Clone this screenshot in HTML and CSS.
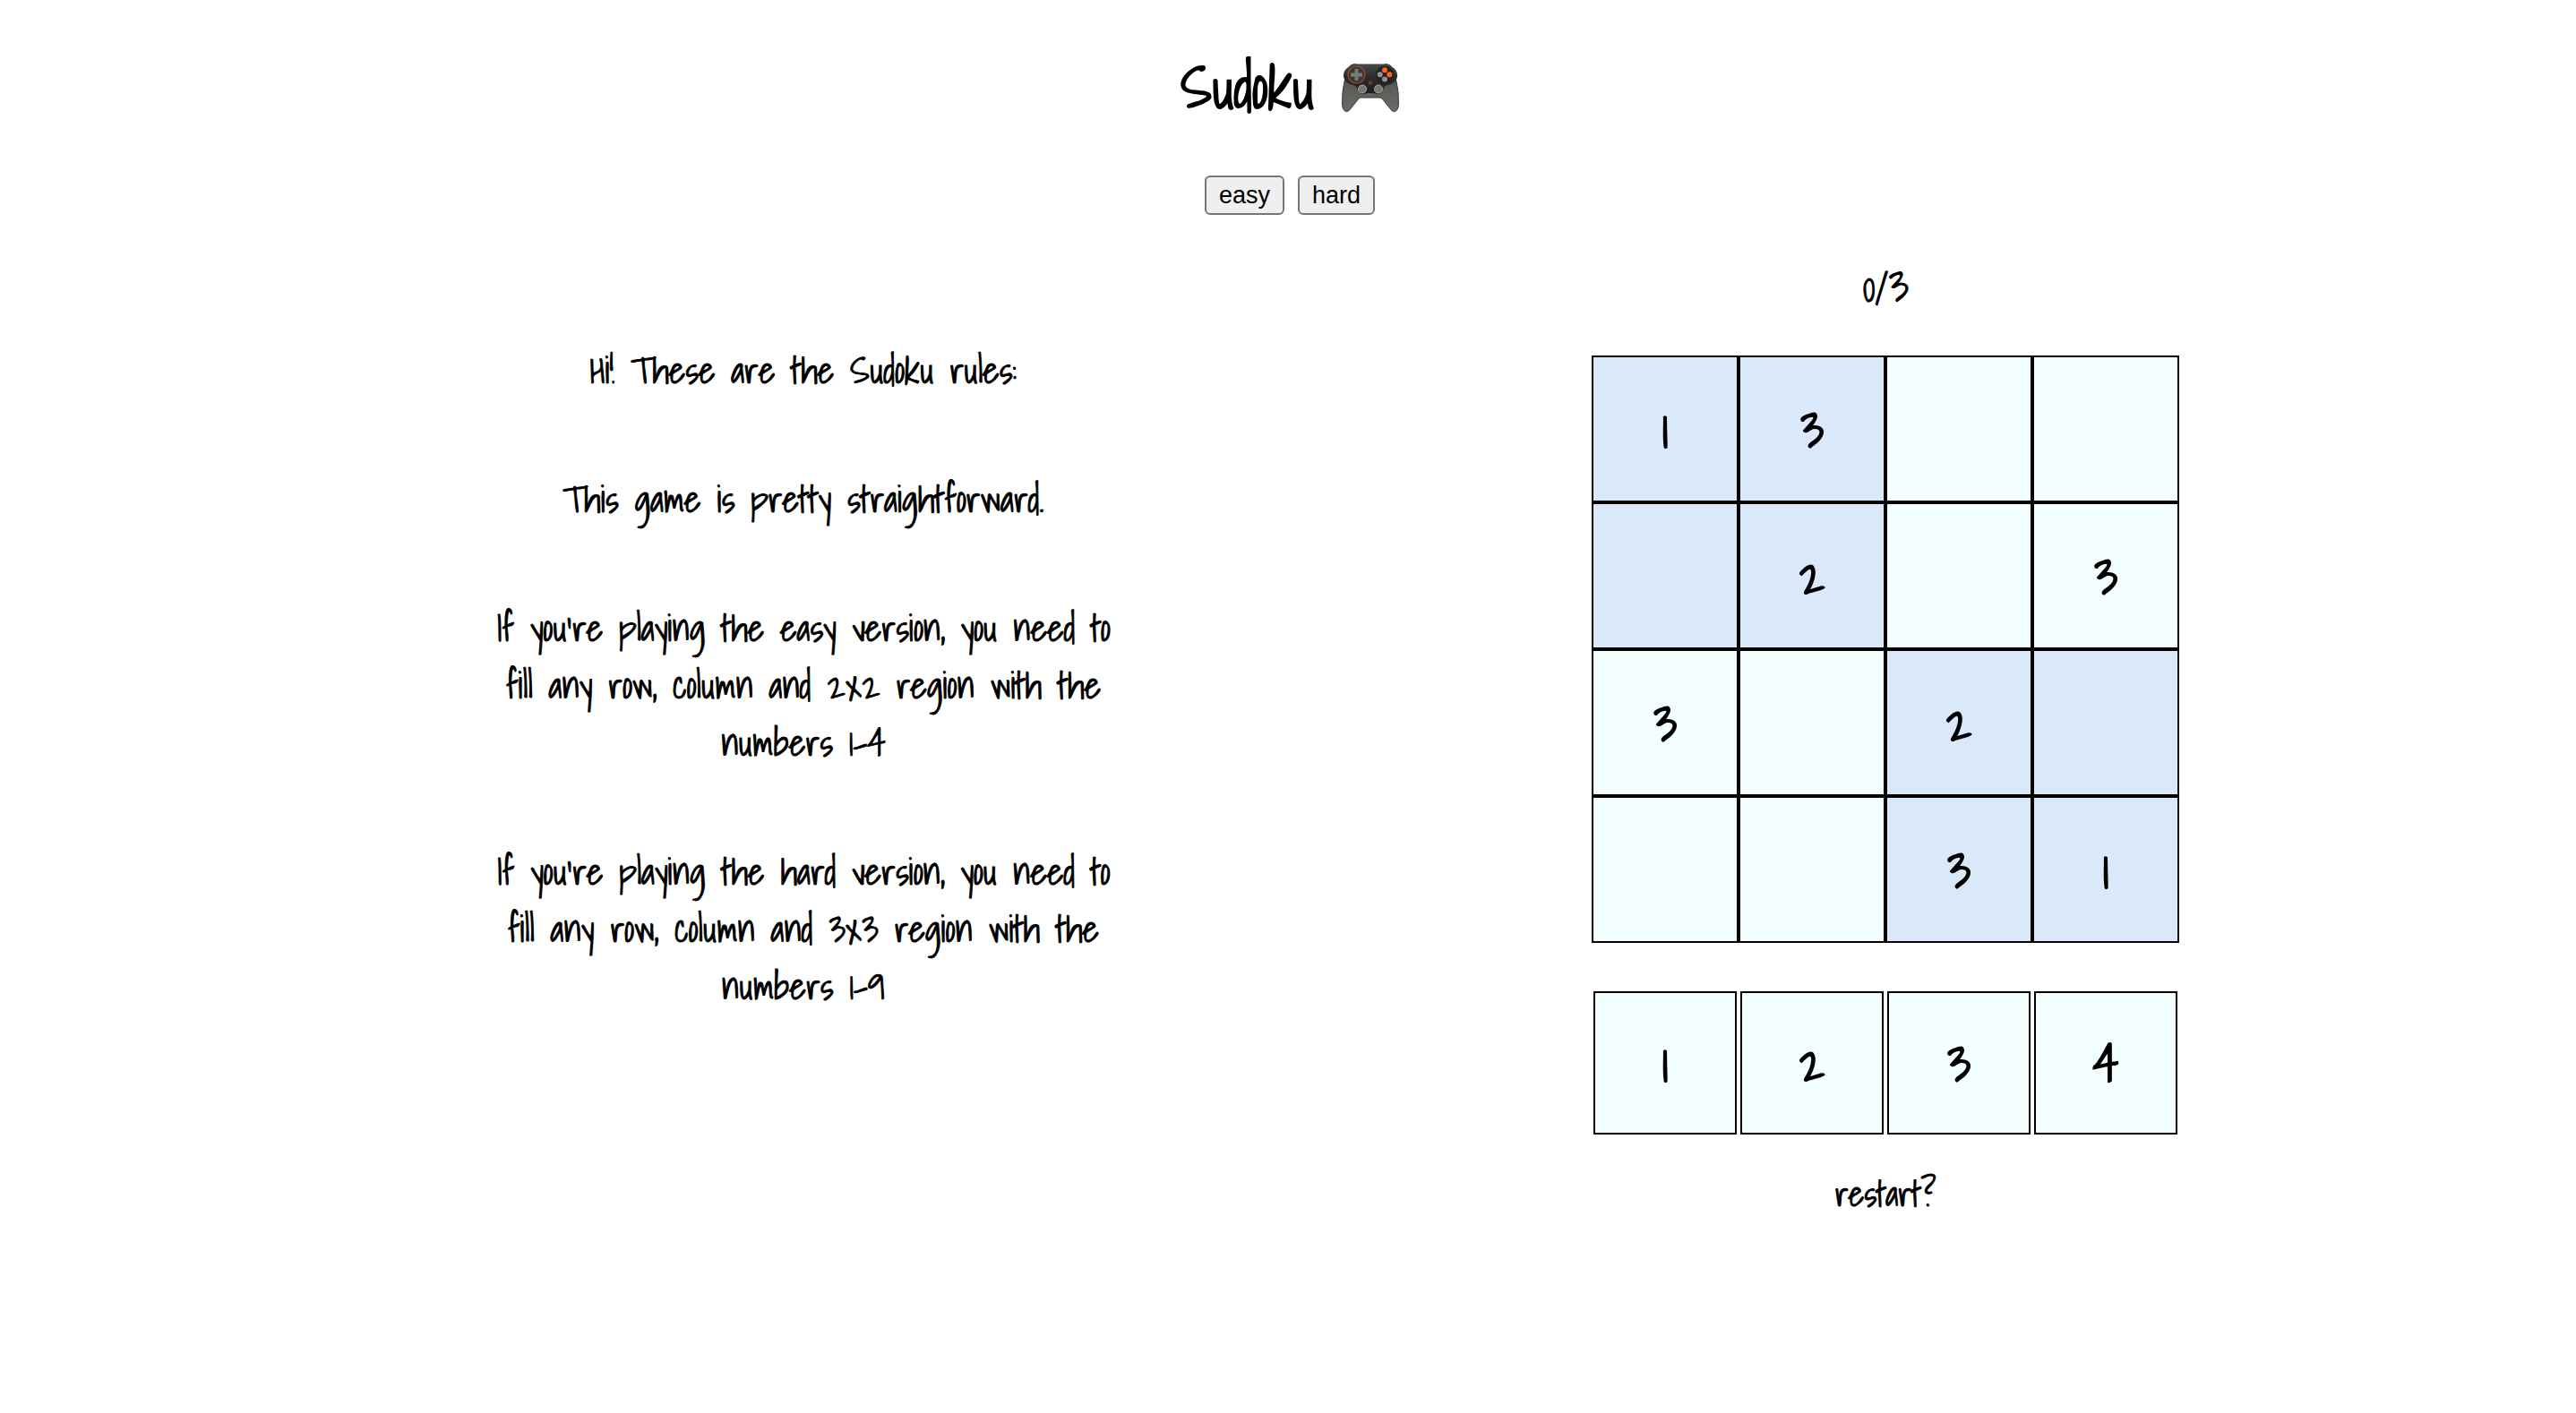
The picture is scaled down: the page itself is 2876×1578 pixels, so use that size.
FILE: index.html
```html
<!DOCTYPE html>
<html lang="en">
<head>
<meta charset="utf-8">
<meta name="viewport" content="width=device-width, initial-scale=1">
<title>Sudoku</title>
<link rel="stylesheet" href="styles.css">
</head>
<body>
<header class="header">
  <h1 class="title">Sudoku
    <svg class="gamepad" viewBox="0 0 64 54" aria-hidden="true">
      <defs>
        <linearGradient id="shell" x1="0" y1="0" x2="0" y2="1">
          <stop offset="0" stop-color="#4c4e4b"/>
          <stop offset="1" stop-color="#6b6b65"/>
        </linearGradient>
        <linearGradient id="face" x1="0" y1="0" x2="0" y2="1">
          <stop offset="0" stop-color="#454947"/>
          <stop offset="0.4" stop-color="#2a2d2c"/>
          <stop offset="1" stop-color="#1b1d1c"/>
        </linearGradient>
      </defs>
      <path d="M10 2Q14 -.5 17 1H47Q50 -.5 54 2Q58 5 60 15Q64 31 63.500 45Q63 54 58 53.500Q56 53.500 53 49L45 39Q44 38 42 38H22Q20 38 19 39L11 49Q8 53.500 6 53.500Q1 54 .5 45Q0 31 4 15Q6 5 10 2Z" fill="url(#shell)" stroke="#393a37"/>
      <path d="M9 3Q12 1 17 1.500H47Q52 1 55 3Q63 7 62 15Q60 23 51 24Q47 25 46 30Q44 35 39 34L36 33H28L25 34Q20 35 18 30Q17 25 13 24Q4 23 2 15Q1 7 9 3Z" fill="url(#face)"/>
      <circle cx="16.500" cy="12.500" r="9.500" fill="#353a38" stroke="#a3491d" stroke-width="1.200"/>
      <path d="M14.500 6h4v4.500h4.500v4h-4.500v4.500h-4v-4.500h-4.500v-4h4.500z" fill="#777b76"/>
      <circle cx="48" cy="12.500" r="10" fill="#202322"/>
      <circle cx="48" cy="7.200" r="3" fill="#ff6519"/>
      <circle cx="53.300" cy="12.300" r="3" fill="#ff6519"/>
      <circle cx="42.700" cy="12.300" r="3" fill="#8f928f"/>
      <circle cx="48" cy="17.500" r="3" fill="#8f928f"/>
      <circle cx="32" cy="21.500" r="1.500" fill="#54210c" stroke="#bd4d19"/>
      <circle cx="23" cy="28.500" r="4.500" fill="#747877" stroke="#a6aaa8"/>
      <circle cx="41" cy="28.500" r="4.500" fill="#747877" stroke="#a6aaa8"/>
    </svg>
  </h1>
  <div class="levels">
    <button class="level" type="button">easy</button>
    <button class="level" type="button">hard</button>
  </div>
</header>
<main class="main">
  <section class="rules">
    <p>Hi! These are the Sudoku rules:</p>
    <p>This game is pretty straightforward.</p>
    <p>If you're playing the easy version, you need to fill any row, column and 2x2 region with the numbers 1-4</p>
    <p>If you're playing the hard version, you need to fill any row, column and 3x3 region with the numbers 1-9</p>
  </section>
  <section class="game">
    <p class="score">0/3</p>
    <div class="board">
      <button class="cell shaded" type="button">1</button>
      <button class="cell shaded" type="button">3</button>
      <button class="cell" type="button" aria-label="empty"></button>
      <button class="cell" type="button" aria-label="empty"></button>
      <button class="cell shaded" type="button" aria-label="empty"></button>
      <button class="cell shaded" type="button">2</button>
      <button class="cell" type="button" aria-label="empty"></button>
      <button class="cell" type="button">3</button>
      <button class="cell" type="button">3</button>
      <button class="cell" type="button" aria-label="empty"></button>
      <button class="cell shaded" type="button">2</button>
      <button class="cell shaded" type="button" aria-label="empty"></button>
      <button class="cell" type="button" aria-label="empty"></button>
      <button class="cell" type="button" aria-label="empty"></button>
      <button class="cell shaded" type="button">3</button>
      <button class="cell shaded" type="button">1</button>
    </div>
    <div class="picker">
      <button class="cell" type="button">1</button>
      <button class="cell" type="button">2</button>
      <button class="cell" type="button">3</button>
      <button class="cell" type="button">4</button>
    </div>
    <button class="restart" type="button">restart?</button>
  </section>
</main>
</body>
</html>
```
FILE: styles.css
```css
* {
  box-sizing: border-box;
}

body {
  margin: 0;
  background: #fff;
  color: #000;
  font-family: "Shadows Into Light", "Liberation Sans Narrow", Lato, sans-serif;
  font-size: 40px;
  line-height: 64px;
  -webkit-text-stroke: 1px #000;
}

p {
  margin: 0;
}

button {
  margin: 0;
  color: inherit;
  font-family: inherit;
}

.header {
  display: flex;
  flex-direction: column;
  align-items: center;
  gap: 48px;
  padding: 48px 0 0 4px;
}

.title {
  display: flex;
  align-items: center;
  gap: 30px;
  margin: 0;
  font-size: 64px;
  font-weight: 400;
  line-height: 100px;
  -webkit-text-stroke-width: 2px;
}

.gamepad {
  width: 64px;
  height: 54px;
}

.levels {
  display: flex;
  gap: 15px;
}

.level {
  height: 44px;
  padding: 0 14px;
  border: 2px solid #767676;
  border-radius: 6px;
  background: #efefef;
  font-family: "Liberation Sans", Arial, sans-serif;
  font-size: 27px;
  -webkit-text-stroke-width: 0;
}

.main {
  display: flex;
  justify-content: space-between;
  align-items: flex-start;
  padding: 48px 15.4%;
}

.rules {
  display: flex;
  flex: 0 1 908px;
  flex-direction: column;
  align-items: center;
  gap: 80px;
  padding-top: 93px;
  text-align: center;
}

.rules p {
  max-width: 720px;
}

.game {
  display: flex;
  flex-direction: column;
  align-items: center;
}

.score {
  font-size: 48px;
}

.board {
  display: grid;
  grid-template-columns: repeat(4, 164px);
  grid-auto-rows: 164px;
  margin-top: 45px;
}

.picker {
  display: grid;
  grid-template-columns: repeat(4, 160px);
  grid-auto-rows: 160px;
  gap: 4px;
  margin: 54px 0 34px;
}

.cell {
  padding: 0;
  border: 2px solid #000;
  background: #f3ffff;
  font-size: 56px;
  -webkit-text-stroke-width: 2px;
}

.shaded {
  background: #dae9fa;
}

.restart {
  padding: 0;
  border: 0;
  background: none;
  font-size: 38px;
  line-height: inherit;
}
```
